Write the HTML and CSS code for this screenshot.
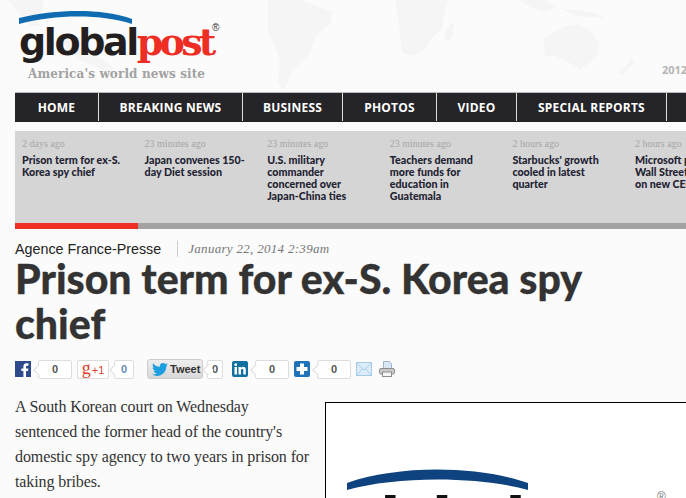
FILE: index.html
```html
<!DOCTYPE html>
<html>
<head>
  <meta charset="utf-8">
  <title>Prison term for ex-S. Korea spy chief</title>
  <link rel="stylesheet" href="styles.css">
</head>
<body>
  <header class="masthead">
    <!-- faint world map behind the logo -->
    <svg class="worldmap" width="686" height="90" viewBox="0 0 686 90">
      <path d="M8 0 L44 0 L42 12 L34 16 L40 26 L30 26 Z"/>
      <path d="M60 34 L78 38 L90 52 L110 64 L118 76 L104 70 L84 62 L68 50 Z"/>
      <path d="M268 0 L300 0 L333 12 L330 24 L316 36 L308 56 L292 72 L284 90 L278 84 L280 60 L268 30 Z"/>
      <path d="M396 0 L448 0 L444 14 L442 28 L432 38 L424 50 L412 56 L402 52 L400 34 L398 18 Z"/>
      <path d="M452 22 L454 24 L452 38 L445 42 L446 30 Z"/>
      <path d="M520 0 L545 0 L556 8 L544 12 L532 8 Z"/>
      <path d="M560 8 L590 12 L606 18 L576 16 Z"/>
      <path d="M543 38 L566 26 L578 24 L590 30 L600 44 L597 56 L588 64 L580 70 L572 64 L556 56 L545 56 Z"/>
      <path d="M632 58 L635 62 L622 76 L618 72 L626 66 Z"/>
    </svg>
    <a class="logo" href="#">
      <svg class="logo-arc" width="114" height="14" viewBox="0 0 114 14"><path d="M0 7 C36 -2 84 -3 113 8 L113 13 C84 3 36 3 0 13 Z"/></svg>
      <span class="logo-word"><span class="logo-global">global</span><span class="logo-post">post</span><sup class="logo-reg">®</sup></span>
      <span class="tagline">America's world news site</span>
    </a>
    <span class="header-year">2012</span>
  </header>

  <nav class="mainnav">
    <a href="#" class="nav-item nav-home">HOME</a>
    <a href="#" class="nav-item nav-breaking">BREAKING NEWS</a>
    <a href="#" class="nav-item nav-business">BUSINESS</a>
    <a href="#" class="nav-item nav-photos">PHOTOS</a>
    <a href="#" class="nav-item nav-video">VIDEO</a>
    <a href="#" class="nav-item nav-special">SPECIAL REPORTS</a>
  </nav>

  <section class="ticker">
    <div class="ticker-items">
      <div class="ticker-item"><time>2 days ago</time><a href="#">Prison term for ex-S. Korea spy chief</a></div>
      <div class="ticker-item"><time>23 minutes ago</time><a href="#">Japan convenes 150-day Diet session</a></div>
      <div class="ticker-item"><time>23 minutes ago</time><a href="#">U.S. military commander concerned over Japan-China ties</a></div>
      <div class="ticker-item"><time>23 minutes ago</time><a href="#">Teachers demand more funds for education in Guatemala</a></div>
      <div class="ticker-item"><time>2 hours ago</time><a href="#">Starbucks' growth cooled in latest quarter</a></div>
      <div class="ticker-item"><time>2 hours ago</time><a href="#">Microsoft pleases<br>Wall Street<br>on new CEO</a></div>
    </div>
    <div class="ticker-progress"><div class="ticker-progress-fill"></div></div>
  </section>

  <main class="article">
    <div class="byline">
      <span class="source">Agence France-Presse</span>
      <span class="dateline">January 22, 2014 2:39am</span>
    </div>
    <h1>Prison term for ex-S. Korea spy chief</h1>

    <div class="sharebar">
      <span class="icon"><svg width="16" height="16" viewBox="0 0 16 16"><rect width="16" height="16" fill="#2d4a8a"/><path d="M11 16V10h2l.4-2.600H11V6c0-.8.3-1.200 1.200-1.200h1.300V2.500C13 2.400 12.300 2.300 11.500 2.300 9.700 2.300 8.400 3.400 8.400 5.600v1.800H6.400V10h2v6z" fill="#fff"/></svg></span>
      <span class="count count-wide">0</span>
      <span class="gplus"><span class="gplus-g">g</span>+1</span>
      <span class="count count-small count-blue">0</span>
      <span class="tweet"><svg width="16" height="13" viewBox="0 0 16 13"><path d="M16 1.600c-.6.300-1.200.4-1.900.5.700-.4 1.200-1 1.400-1.800-.6.400-1.300.6-2 .8C12.900.400 12 0 11 0 9.200 0 7.700 1.500 7.700 3.300c0 .3 0 .5.100.7C5 3.900 2.600 2.600 1.100.6.800 1.100.7 1.700.7 2.300c0 1.100.6 2.100 1.500 2.700-.5 0-1-.2-1.500-.4 0 1.600 1.100 2.900 2.600 3.200-.5.100-1 .2-1.500.1.400 1.300 1.600 2.300 3.100 2.300C3.700 11.200 1.900 11.800 0 11.600 1.500 12.500 3.200 13 5 13c6 0 9.400-5 9.400-9.400V3.200c.6-.5 1.200-1 1.600-1.600z" fill="#1b9fe0"/></svg>Tweet</span>
      <span class="count count-tight">0</span>
      <span class="icon"><svg width="16" height="16" viewBox="0 0 16 16"><rect width="16" height="16" rx="2" fill="#11709f"/><rect x="2.500" y="6" width="2.500" height="7.500" fill="#fff"/><circle cx="3.700" cy="3.700" r="1.400" fill="#fff"/><path d="M6.500 6H9v1c.5-.8 1.300-1.200 2.300-1.200 1.700 0 2.500 1.100 2.500 3v4.700h-2.500V9.200c0-.9-.3-1.300-1-1.300S9 8.400 9 9.300v4.200H6.500z" fill="#fff"/></svg></span>
      <span class="count count-wide">0</span>
      <span class="icon"><svg width="16" height="16" viewBox="0 0 16 16"><rect width="16" height="16" rx="2" fill="#1d72b8"/><path d="M6 2.500h4V6h3.500v4H10v3.500H6V10H2.500V6H6z" fill="#fff"/></svg></span>
      <span class="count count-wide">0</span>
      <span class="icon"><svg width="16" height="16" viewBox="0 0 16 16"><rect x=".5" y="1.500" width="15" height="13" fill="#dcecf8" stroke="#a6cbe6"/><path d="M.5 2l7.500 7 7.500-7M.5 14.500l6-7M15.500 14.500l-6-7" fill="none" stroke="#a6cbe6"/></svg></span>
      <span class="icon icon-print"><svg width="16" height="16" viewBox="0 0 16 16"><path d="M4.500.5h6l2 2v6h-8z" fill="#dbe8f4" stroke="#9db6cc"/><rect x=".5" y="7.500" width="15" height="5.500" rx="1.500" fill="#c9c9c9" stroke="#8d8d8d"/><rect x="3.500" y="11" width="9" height="4.500" fill="#f4f4f4" stroke="#8d8d8d"/></svg></span>
    </div>

    <div class="article-body">
      <div class="article-text">
        <p>A South Korean court on Wednesday sentenced the former head of the country's domestic spy agency to two years in prison for taking bribes.</p>
      </div>
      <figure class="article-photo">
        <svg width="182" height="21" viewBox="0 0 182 21"><path d="M0 14 C50 -4 130 -4 181 14 L181 21 C130 7 50 7 0 21 Z" fill="#0f437f"/></svg>
        <span class="photo-word">global<span class="photo-post">post</span></span>
        <span class="photo-reg">®</span>
      </figure>
    </div>
  </main>
</body>
</html>
```

FILE: styles.css
```css
* {
  box-sizing: border-box;
}
html, body {
  height: 498px;
  overflow: hidden;
}
body {
  margin: 0;
  padding: 0 0 0 15px;
  background: #fbfbfb;
  color: #222;
  font-family: "Liberation Serif", serif;
}
a {
  color: inherit;
  text-decoration: none;
}

/* header */
.masthead {
  height: 92px;
  padding-top: 11px;
}
.worldmap {
  position: absolute;
  top: 0;
  left: 0;
  fill: #f5f5f5;
}
.logo {
  position: relative;
  display: flex;
  flex-direction: column;
  width: 210px;
  padding-left: 4px;
}
.logo-arc {
  display: block;
  fill: #0f6cb0;
}
.logo-word {
  display: block;
  height: 39px;
  margin-top: -3px;
  font-size: 38px;
  font-weight: 700;
  line-height: 39px;
  white-space: nowrap;
}
.logo-global {
  color: #231f20;
  font-family: "DejaVu Sans", sans-serif;
  letter-spacing: -2.400px;
}
.logo-post {
  color: #ee2d24;
  font-family: "DejaVu Serif", serif;
  letter-spacing: -3.800px;
}
.logo-reg {
  position: absolute;
  top: 12px;
  left: 197px;
  color: #333;
  font-family: "Liberation Sans", sans-serif;
  font-size: 10px;
  font-weight: 400;
  line-height: 1;
  letter-spacing: 0;
}
.tagline {
  margin: 6px 0 0 9px;
  color: #a2a2a2;
  font-family: "DejaVu Serif", serif;
  font-size: 12px;
  font-weight: 700;
  letter-spacing: .12px;
  white-space: nowrap;
}
.header-year {
  position: absolute;
  top: 62px;
  left: 662px;
  color: #b5b5b5;
  font-family: "Open Sans", sans-serif;
  font-size: 11px;
  font-weight: 700;
}

/* main nav */
.mainnav {
  position: relative;
  display: flex;
  height: 30px;
  border-top: 1px solid #bbb;
  background: #252428;
}
.nav-item {
  display: block;
  height: 28px;
  border-right: 1px solid #ddd;
  color: #fff;
  font-family: "Open Sans", sans-serif;
  font-size: 12px;
  font-weight: 700;
  line-height: 29px;
  letter-spacing: .2px;
  text-align: center;
  white-space: nowrap;
}
.nav-home { width: 84px; }
.nav-breaking { width: 144px; }
.nav-business { width: 100px; }
.nav-photos { width: 94px; }
.nav-video { width: 80px; }
.nav-special { width: 150px; }

/* ticker */
.ticker {
  width: 671px;
  margin-top: 9px;
  overflow: hidden;
}
.ticker-items {
  display: flex;
  height: 92px;
  padding: 6px 0 0 7px;
  background: #d5d5d5;
}
.ticker-item {
  flex: none;
  width: 122.600px;
  padding-right: 17px;
}
.ticker-item time {
  display: block;
  color: #a5a5a5;
  font-size: 10px;
  line-height: 14px;
}
.ticker-item a {
  display: block;
  margin-top: 3px;
  color: #232333;
  font-family: Lato, sans-serif;
  font-size: 10.700px;
  font-weight: 900;
  line-height: 12px;
}
.ticker-progress {
  height: 6px;
  background: #a3a3a3;
}
.ticker-progress-fill {
  width: 123px;
  height: 6px;
  background: #ee2d24;
}

/* article */
.byline {
  display: flex;
  align-items: center;
  height: 16px;
  margin-top: 12px;
}
.source {
  padding-right: 16px;
  border-right: 1px solid #ccc;
  color: #222;
  font-family: "Liberation Sans", sans-serif;
  font-size: 14.300px;
  line-height: 16px;
}
.dateline {
  padding-left: 10px;
  color: #777;
  font-size: 13px;
  font-style: italic;
  letter-spacing: .3px;
}
h1 {
  width: 640px;
  margin: -1px 0 0;
  color: #333;
  font-family: Lato, sans-serif;
  font-size: 41px;
  font-weight: 900;
  line-height: 45px;
  -webkit-text-stroke: .3px #333;
}
.sharebar {
  display: flex;
  align-items: center;
  height: 20px;
  margin-top: 13px;
}
.icon {
  display: block;
  flex: none;
  height: 16px;
}
.icon svg, .tweet svg {
  display: block;
}
.count {
  position: relative;
  flex: none;
  height: 19px;
  margin-left: 7px;
  border: 1px solid #ddd;
  border-radius: 2px;
  background: #fff;
  color: #555;
  font-family: "Liberation Sans", sans-serif;
  font-size: 11px;
  font-weight: 700;
  line-height: 17px;
  text-align: center;
}
.count::before {
  content: "";
  position: absolute;
  top: 5px;
  left: -4px;
  width: 7px;
  height: 7px;
  border-left: 1px solid #ddd;
  border-bottom: 1px solid #ddd;
  background: #fff;
  transform: rotate(45deg);
}
.count-wide {
  width: 34px;
  margin-right: 5px;
}
.count-small {
  width: 20px;
  margin-left: 5px;
  margin-right: 13px;
}
.count-blue {
  color: #6a8ab8;
}
.count-tight {
  width: 16px;
  margin-left: 4px;
  margin-right: 9px;
}
.gplus {
  flex: none;
  width: 32px;
  height: 19px;
  border: 1px solid #ddd;
  border-radius: 2px;
  background: #fff;
  color: #d8422e;
  font-family: "Liberation Sans", sans-serif;
  font-size: 11px;
  line-height: 15px;
  text-align: center;
}
.gplus-g {
  margin-right: 1px;
  font-family: "Liberation Serif", serif;
  font-size: 18px;
}
.tweet {
  flex: none;
  display: flex;
  align-items: center;
  gap: 2px;
  width: 56px;
  height: 20px;
  padding-left: 4px;
  border: 1px solid #ccc;
  border-radius: 3px;
  background: linear-gradient(#eee, #d8d8d8);
  color: #333;
  font-family: "Liberation Sans", sans-serif;
  font-size: 11px;
  font-weight: 700;
}
.icon-print {
  margin-left: 7px;
}
.article-body {
  display: flex;
  align-items: flex-start;
  gap: 14px;
  margin-top: 15px;
}
.article-text {
  flex: none;
  width: 296px;
}
.article-text p {
  margin: 0;
  color: #333;
  font-size: 16px;
  line-height: 25px;
  letter-spacing: -.1px;
}
.article-photo {
  position: relative;
  flex: none;
  width: 400px;
  height: 200px;
  margin: 8px 0 0;
  padding: 66px 0 0 21px;
  border: 1px solid #000;
  background: #fff;
}
.article-photo svg {
  display: block;
}
.photo-word {
  display: block;
  margin: -1px 0 0 -5px;
  color: #111;
  font-family: "DejaVu Sans", sans-serif;
  font-size: 60px;
  font-weight: 700;
  line-height: 62px;
  letter-spacing: -5px;
  white-space: nowrap;
}
.photo-post {
  margin-left: 18px;
  color: #d8232f;
}
.photo-reg {
  position: absolute;
  top: 87px;
  left: 331px;
  color: #777;
  font-family: "Liberation Sans", sans-serif;
  font-size: 12px;
}
```
